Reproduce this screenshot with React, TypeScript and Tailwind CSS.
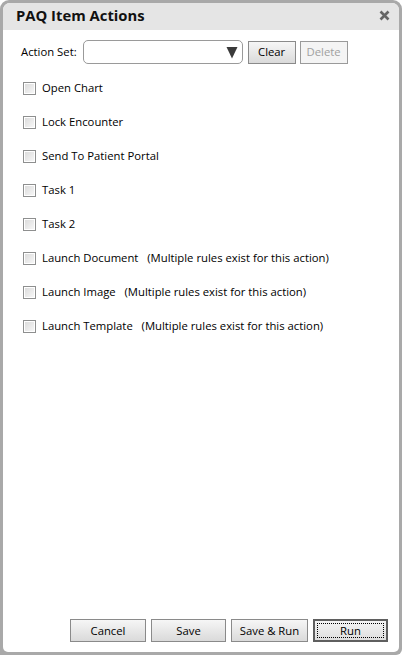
import React from 'react'

const actions = [
  { label: 'Open Chart' },
  { label: 'Lock Encounter' },
  { label: 'Send To Patient Portal' },
  { label: 'Task 1' },
  { label: 'Task 2' },
  { label: 'Launch Document', note: true },
  { label: 'Launch Image', note: true },
  { label: 'Launch Template', note: true },
]

function Checkbox() {
  return (
    <span className="w-[13px] h-[13px] border border-[#8e8f8f] bg-white p-[1px] shrink-0">
      <span className="block w-full h-full bg-gradient-to-br from-[#dcdcdc] to-[#f6f6f6]" />
    </span>
  )
}

function Btn({ children, focus, disabled, className }: { children: React.ReactNode; focus?: boolean; disabled?: boolean; className?: string }) {
  if (focus) {
    return (
      <button className={`h-[23px] border-2 border-[#5f5f5f] bg-gradient-to-b from-[#f4f4f4] to-[#dedede] p-[2px] ${className}`}>
        <span className="flex items-center justify-center w-full h-full border border-dotted border-black leading-none">{children}</span>
      </button>
    )
  }
  return (
    <button
      className={`h-[23px] border leading-none ${
        disabled
          ? 'border-[#9a9a9a] bg-[#f4f4f4] text-[#a0a0a0]'
          : 'border-[#8a8a8a] bg-gradient-to-b from-[#f6f6f6] to-[#dadada] text-black'
      } ${className}`}
    >
      {children}
    </button>
  )
}

export default function App() {
  return (
    <div className="w-[402px] h-[655px] bg-white font-['Open_Sans',sans-serif] text-[11.3px] text-black">
      <div className="w-full h-full bg-[#a9a9a9] rounded-t-[9px] rounded-br-[6px] p-[3px]">
        <div className="w-full h-full flex flex-col bg-white rounded-t-[7px] rounded-b-[5px] overflow-hidden">
          {/* Header */}
          <div className="h-[27px] shrink-0 bg-[#e5e5e5] flex items-center justify-between pl-[13px] pr-[9px] pb-[3px]">
            <span className="text-[14.8px] font-bold text-[#111]">PAQ Item Actions</span>
            <svg width="11" height="11" viewBox="0 0 11 11">
              <path d="M1.5 1.5 L9.5 9.5 M9.5 1.5 L1.5 9.5" stroke="#666" strokeWidth="2.6" />
            </svg>
          </div>

          {/* Action set row */}
          <div className="flex items-center mt-[10px] pl-[18px]">
            <span className="mr-[6px]">Action Set:</span>
            <div className="w-[160px] h-[24px] border border-[#9a9a9a] rounded-[5px] flex items-center justify-end pr-[4px]">
              <svg width="12" height="13" viewBox="0 0 12 13">
                <path d="M0.5 1 L11.5 1 L6 12.5 Z" fill="#3a3a3a" />
              </svg>
            </div>
            <Btn className="w-[48px] ml-[5px]">Clear</Btn>
            <Btn disabled className="w-[48px] ml-[4px]">Delete</Btn>
          </div>

          {/* Checkbox list */}
          <div className="flex flex-col mt-[17px] pl-[20px] gap-[19px]">
            {actions.map((a) => (
              <div key={a.label} className="flex items-center h-[15px]">
                <Checkbox />
                <span className="ml-[6px] whitespace-pre">
                  {a.label}
                  {a.note ? '   (Multiple rules exist for this action)' : ''}
                </span>
              </div>
            ))}
          </div>

          {/* Footer */}
          <div className="mt-auto mb-[10px] flex justify-end gap-[5px] pr-[11px]">
            <Btn className="w-[76px]">Cancel</Btn>
            <Btn className="w-[75px]">Save</Btn>
            <Btn className="w-[77px]">Save &amp; Run</Btn>
            <Btn focus className="w-[75px]">Run</Btn>
          </div>
        </div>
      </div>
    </div>
  )
}
